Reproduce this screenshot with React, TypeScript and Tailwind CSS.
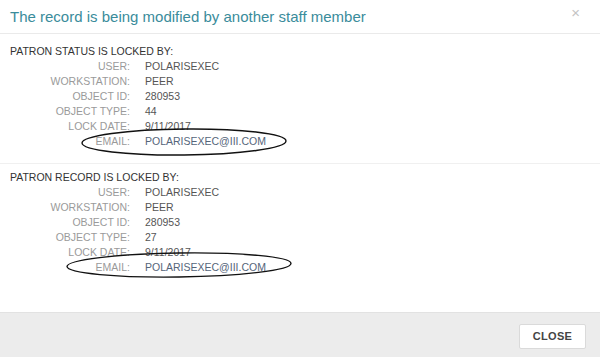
import React from 'react';

type Lock = {
  heading: string;
  user: string;
  workstation: string;
  objectId: string;
  objectType: string;
  lockDate: string;
  email: string;
};

const locks: Lock[] = [
  {
    heading: 'PATRON STATUS IS LOCKED BY:',
    user: 'POLARISEXEC',
    workstation: 'PEER',
    objectId: '280953',
    objectType: '44',
    lockDate: '9/11/2017',
    email: 'POLARISEXEC@III.COM',
  },
  {
    heading: 'PATRON RECORD IS LOCKED BY:',
    user: 'POLARISEXEC',
    workstation: 'PEER',
    objectId: '280953',
    objectType: '27',
    lockDate: '9/11/2017',
    email: 'POLARISEXEC@III.COM',
  },
];

function Row({ label, value, email }: { label: string; value: string; email?: boolean }) {
  return (
    <div className="flex">
      <span className="w-[120px] text-right text-[#9a9a9a]">{label}</span>
      <span className={`ml-[15px] ${email ? 'text-[#55657a]' : 'text-[#555]'}`}>{value}</span>
    </div>
  );
}

function LockBlock({ lock }: { lock: Lock }) {
  return (
    <div>
      <div className="text-[#333]">{lock.heading}</div>
      <Row label="USER:" value={lock.user} />
      <Row label="WORKSTATION:" value={lock.workstation} />
      <Row label="OBJECT ID:" value={lock.objectId} />
      <Row label="OBJECT TYPE:" value={lock.objectType} />
      <Row label="LOCK DATE:" value={lock.lockDate} />
      <Row label="EMAIL:" value={lock.email} email />
    </div>
  );
}

export default function App() {
  return (
    <div className="relative w-[600px] h-[357px] bg-white flex flex-col font-['Liberation_Sans',Arial,sans-serif] text-[10.5px] leading-[15px] overflow-hidden">
      {/* header */}
      <div className="h-[34px] shrink-0 border-b border-[#eaeaea] px-[10px] flex items-center justify-between">
        <h1 className="text-[15px] leading-[18px] text-[#3a8c9b]">The record is being modified by another staff member</h1>
        <span className="text-[15px] text-[#c4c4c4] mr-[10px] -mt-[8px]">×</span>
      </div>

      <div className="px-[10px] pt-[10px] pb-[14px] border-b border-[#f0f0f0]">
        <LockBlock lock={locks[0]} />
      </div>
      <div className="px-[10px] pt-[6px] flex-1">
        <LockBlock lock={locks[1]} />
      </div>

      {/* footer */}
      <div className="h-[45px] shrink-0 bg-[#ececec] border-t border-[#e2e2e2] flex items-center justify-end pr-[14px]">
        <button className="w-[67px] h-[25px] mt-[3px] bg-white border border-[#dadada] rounded-[2px] text-[11px] font-bold text-[#444] tracking-[0.3px]">
          CLOSE
        </button>
      </div>

      {/* hand-drawn highlight around the email rows */}
      <svg className="absolute inset-0 pointer-events-none" width="600" height="357">
        <ellipse cx="184" cy="142" rx="102" ry="13" fill="none" stroke="#111" strokeWidth="1.4" transform="rotate(-0.6 184 142)" />
        <ellipse cx="179" cy="265" rx="112" ry="12" fill="none" stroke="#111" strokeWidth="1.4" transform="rotate(-0.8 179 265)" />
      </svg>
    </div>
  );
}
